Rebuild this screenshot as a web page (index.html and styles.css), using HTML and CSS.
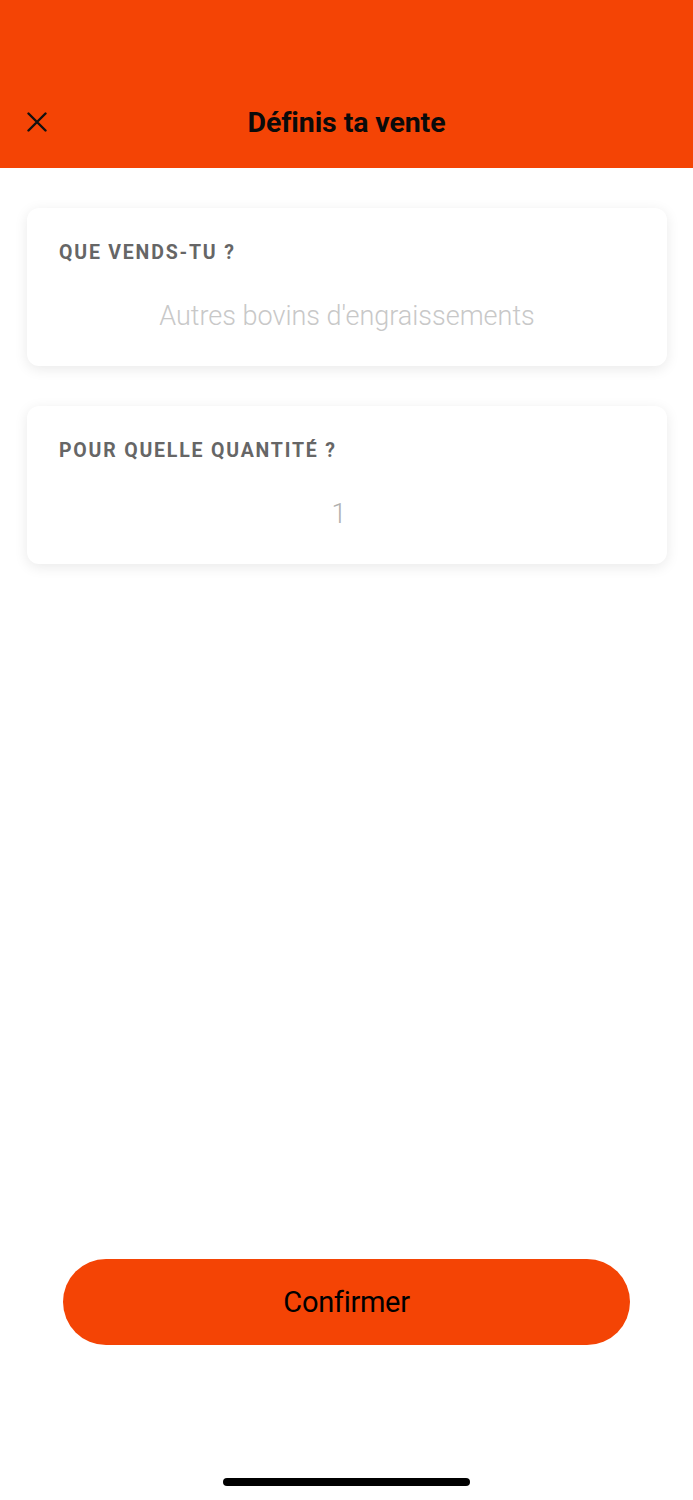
FILE: index.html
```html
<!DOCTYPE html>
<html lang="fr">
<head>
<meta charset="utf-8">
<title>Définis ta vente</title>
<link rel="stylesheet" href="styles.css">
</head>
<body>
<div class="page">
  <header class="header">
    <div class="title-row">
      <button class="close" aria-label="Fermer">
        <svg width="20" height="20" viewBox="0 0 20 20"><path d="M1.5 1.5 L18.5 18.5 M18.5 1.5 L1.5 18.5" stroke="#111" stroke-width="2.4" stroke-linecap="round" fill="none"/></svg>
      </button>
      <h1 class="title">Définis ta vente</h1>
    </div>
  </header>
  <main class="main">
    <section class="card">
      <div class="label">QUE VENDS-TU ?</div>
      <div class="value">Autres bovins d'engraissements</div>
    </section>
    <section class="card">
      <div class="label">POUR QUELLE QUANTITÉ ?</div>
      <div class="value value-qty">1</div>
    </section>
  </main>
  <footer class="footer">
    <button class="confirm">Confirmer</button>
    <div class="home-indicator"></div>
  </footer>
</div>
</body>
</html>
```

FILE: styles.css
```css
* { box-sizing: border-box; }
html, body { margin: 0; padding: 0; background: #fff; }
body { font-family: Roboto, "Liberation Sans", Arial, sans-serif; }
.page { min-height: 1500px; display: flex; flex-direction: column; }
.header { background: #F44405; height: 168px; display: flex; flex-direction: column; justify-content: flex-end; }
.title-row { height: 92px; display: flex; align-items: center; justify-content: center; position: relative; }
.close { position: absolute; left: 27px; top: 36px; width: 20px; height: 20px; padding: 0; border: 0; background: none; display: flex; }
.title { margin: 0; font-size: 28.5px; font-weight: 700; color: #0a0a0a; letter-spacing: -0.1px; }
.main { flex: 1; padding: 40px 26px 0 27px; display: flex; flex-direction: column; gap: 40px; }
.card { background: #fff; border-radius: 12px; box-shadow: 0 3px 14px rgba(0,0,0,0.09); height: 158px; padding: 34px 32px 0; display: flex; flex-direction: column; }
.label { font-size: 19.5px; line-height: 22px; font-weight: 700; color: #666; letter-spacing: 1.8px; }
.value { margin-top: 36px; font-size: 27px; line-height: 32px; font-weight: 300; color: #c8c8c8; text-align: center; }
.value-qty { color: #b0b0b0; padding-right: 16px; }
.footer { display: flex; flex-direction: column; align-items: center; }
.confirm { width: 567px; height: 86px; border: 0; border-radius: 43px; background: #F44405; color: #000; font-family: Roboto, "Liberation Sans", Arial, sans-serif; font-size: 29px; font-weight: 400; letter-spacing: -0.3px; }
.home-indicator { margin-top: 133px; margin-bottom: 14px; width: 247px; height: 8px; border-radius: 4px; background: #000; }
```
